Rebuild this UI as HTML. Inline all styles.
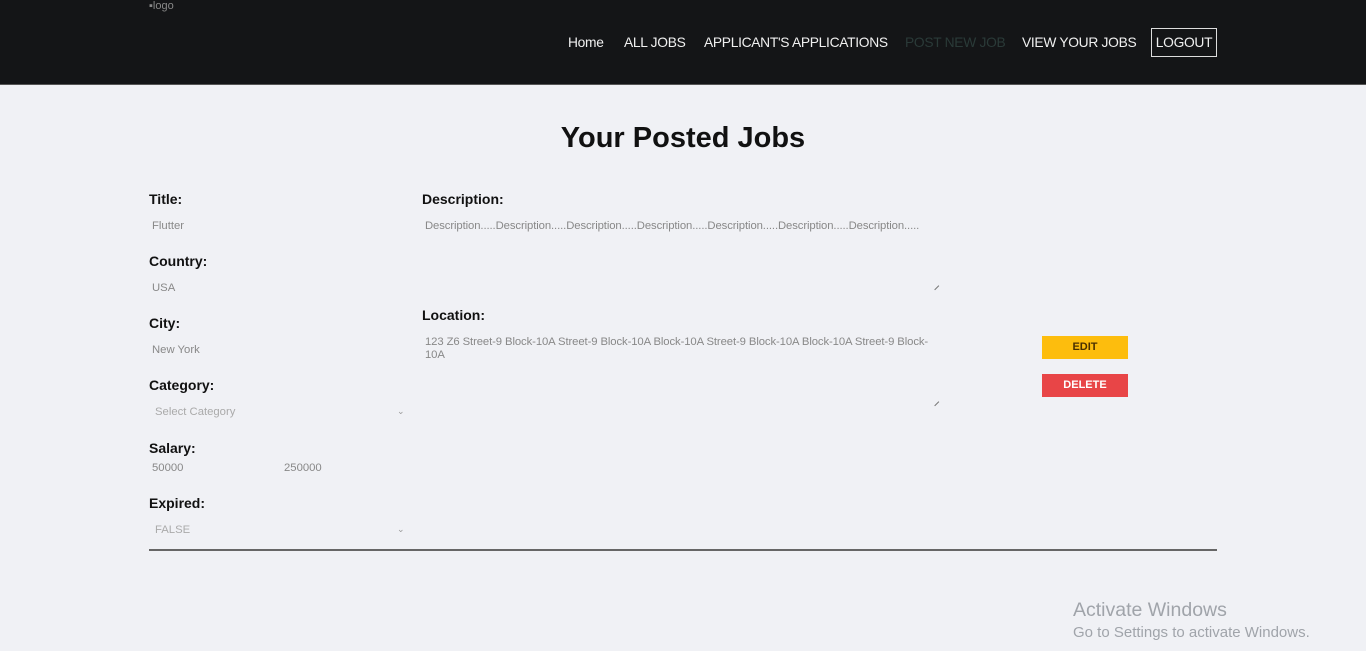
<!DOCTYPE html>
<html><head><meta charset="utf-8"><style>
*{margin:0;padding:0;box-sizing:border-box}
body{width:1366px;height:651px;background:#f0f1f5;font-family:"Liberation Sans",Arial,sans-serif;position:relative;overflow:hidden}
.hdr{position:absolute;left:0;top:0;width:1366px;height:85px;background:#141517;border-bottom:1px solid #555}
.a{position:absolute;white-space:nowrap}
.nav{top:35px;font-size:13.8px;color:#f0f0f0;letter-spacing:-0.3px}
.lbl{font-size:14px;font-weight:bold;color:#111}
.val{font-size:11.3px;color:#888}
.rs{position:absolute;width:6px;height:6px;border-bottom:1px solid #777;transform:rotate(-45deg)}
.chev{font-size:9px;color:#999}
.btn{position:absolute;left:1042px;width:86px;height:23px;font-size:11px;font-weight:bold;text-align:center;line-height:23px}
.win{color:#a0a4aa}
</style></head><body>
<div class="hdr"></div>
<div class="a" style="left:149px;top:0;font-size:11px;color:#888">▪logo</div>
<div class="a nav" style="left:568px">Home</div>
<div class="a nav" style="left:624px">ALL JOBS</div>
<div class="a nav" style="left:704px">APPLICANT'S APPLICATIONS</div>
<div class="a nav" style="left:905px;color:#2a3a38">POST NEW JOB</div>
<div class="a nav" style="left:1022px">VIEW YOUR JOBS</div>
<div class="a" style="left:1151px;top:28px;width:66px;height:29px;border:1px solid #ddd;color:#f0f0f0;font-size:13.8px;line-height:27px;text-align:center;letter-spacing:-0.3px">LOGOUT</div>
<div class="a" style="left:0;width:1366px;top:122px;text-align:center;font-size:29px;font-weight:bold;color:#111">Your Posted Jobs</div>
<div class="a lbl" style="left:149px;top:191px">Title:</div>
<div class="a val" style="left:152px;top:220px">Flutter</div>
<div class="a lbl" style="left:149px;top:253px">Country:</div>
<div class="a val" style="left:152px;top:282px">USA</div>
<div class="a lbl" style="left:149px;top:315px">City:</div>
<div class="a val" style="left:152px;top:344px">New York</div>
<div class="a lbl" style="left:149px;top:377px">Category:</div>
<div class="a val" style="left:155px;top:406px;color:#aaa">Select Category</div>
<div class="a chev" style="left:397px;top:406px">⌄</div>
<div class="a lbl" style="left:149px;top:440px">Salary:</div>
<div class="a val" style="left:152px;top:462px">50000</div>
<div class="a val" style="left:284px;top:462px">250000</div>
<div class="a lbl" style="left:149px;top:495px">Expired:</div>
<div class="a val" style="left:155px;top:524px;color:#aaa">FALSE</div>
<div class="a chev" style="left:397px;top:524px">⌄</div>
<div class="a lbl" style="left:422px;top:191px">Description:</div>
<div class="a val" style="left:425px;top:220px;letter-spacing:-0.1px">Description.....Description.....Description.....Description.....Description.....Description.....Description.....</div>
<div class="rs" style="left:932px;top:283px"></div>
<div class="a lbl" style="left:422px;top:307px">Location:</div>
<div class="a val" style="left:425px;top:336px;line-height:13px;letter-spacing:-0.1px">123 Z6 Street-9 Block-10A Street-9 Block-10A Block-10A Street-9 Block-10A Block-10A Street-9 Block-<br>10A</div>
<div class="rs" style="left:932px;top:399px"></div>
<div class="btn" style="top:336px;background:#fdbd0d;color:#4a3000">EDIT</div>
<div class="btn" style="top:374px;background:#e84547;color:#fff">DELETE</div>
<div class="a" style="left:149px;top:549px;width:1068px;height:2px;background:#666"></div>
<div class="a win" style="left:1073px;top:599px;font-size:19.5px">Activate Windows</div>
<div class="a win" style="left:1073px;top:624px;font-size:15px">Go to Settings to activate Windows.</div>
</body></html>
